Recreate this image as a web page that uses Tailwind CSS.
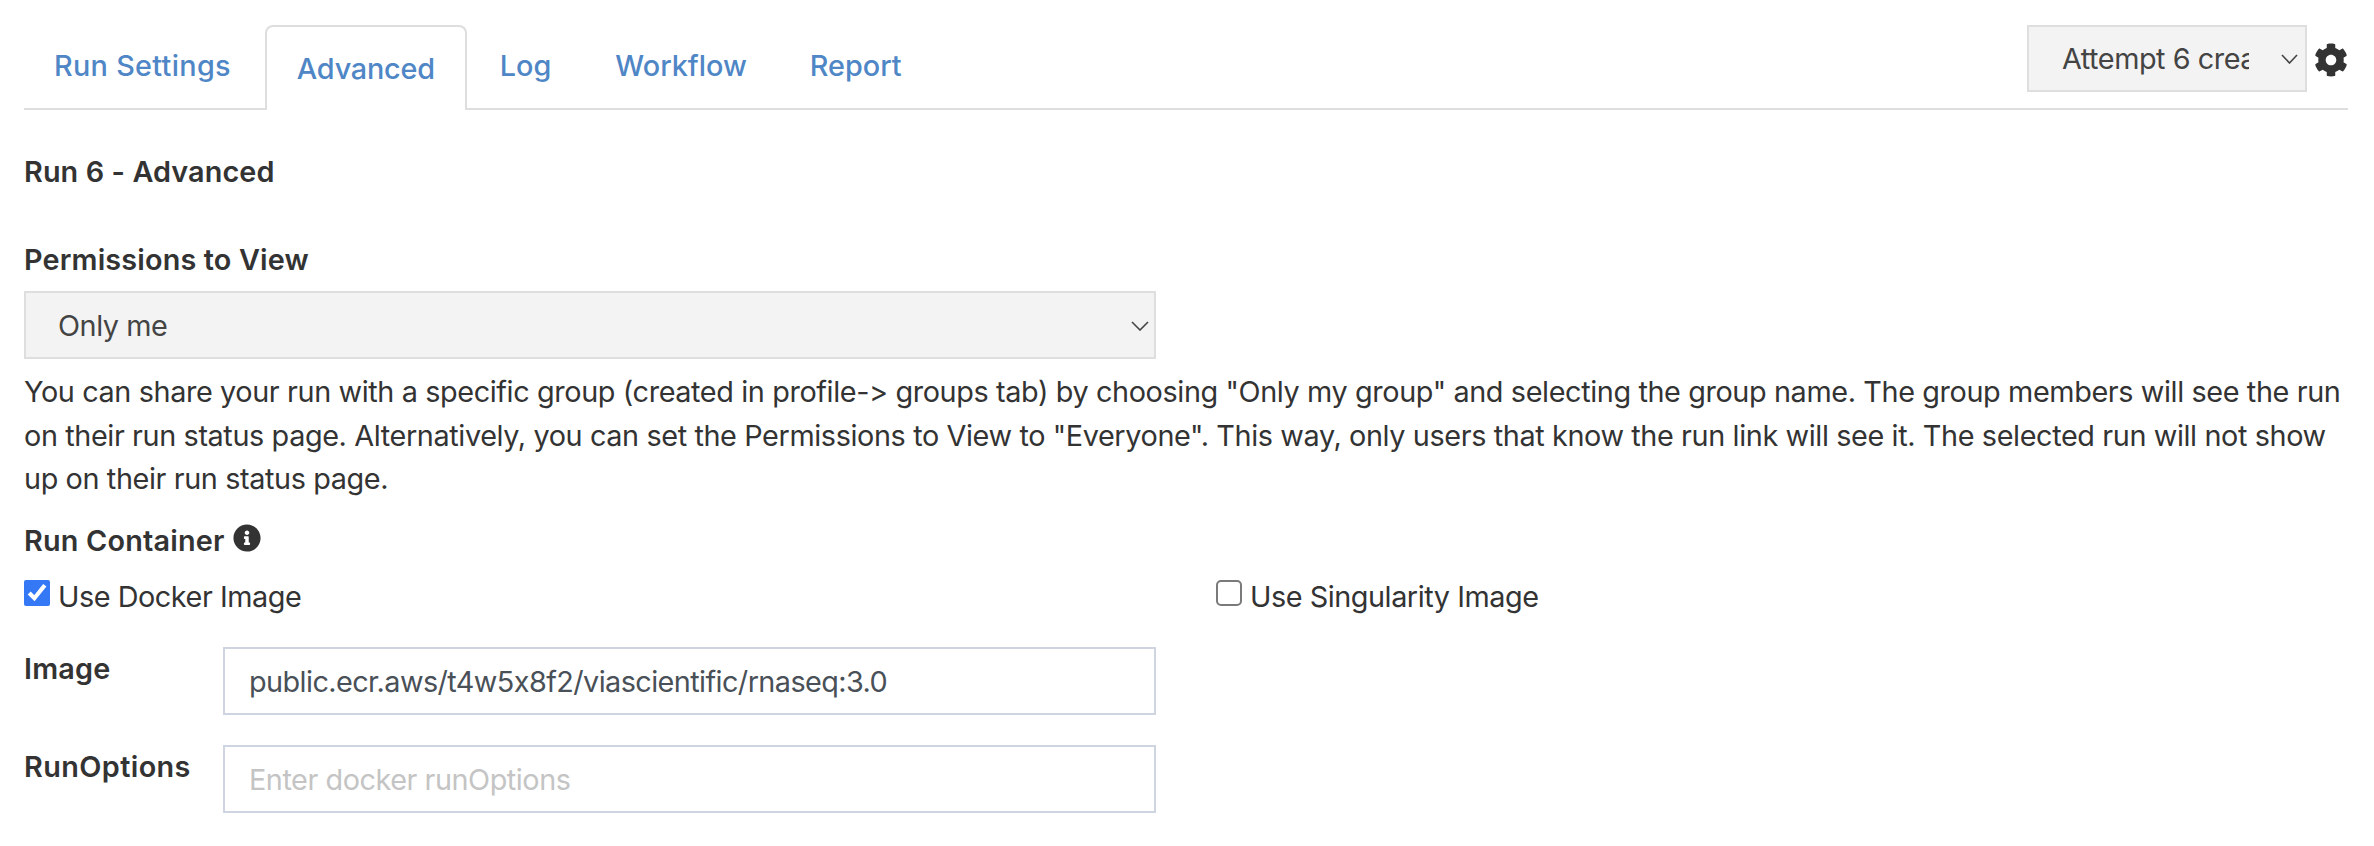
<!DOCTYPE html>
<html lang="en">
<head>
<meta charset="utf-8">
<title>Run 6 - Advanced</title>
<script src="https://cdn.jsdelivr.net/npm/@tailwindcss/browser@4"></script>
</head>
<body class="bg-white font-['Inter',sans-serif] [font-feature-settings:'calt'_0] text-[#333333] text-[28.8px] leading-[43.2px] tracking-[-0.45px] overflow-hidden">
<div class="h-[846px] overflow-hidden pl-[24px] pr-[26px]">
  <div class="flex justify-between h-[110px] border-b-2 border-[#dedede]">
    <nav class="flex h-[110px] font-medium text-[#4f86c6] tracking-normal -ml-[2px]">
      <a class="px-[32px] pt-[44px] mr-[2px] tracking-[0.3px]">Run Settings</a>
      <a class="px-[30px] pt-[20px] mr-[1px] h-[85px] mt-[25px] bg-white border-2 border-b-0 border-[#dedede] rounded-t-[8px] tracking-[-0.2px]">Advanced</a>
      <a class="px-[32px] pt-[44px]">Log</a>
      <a class="pl-[32px] pr-[31px] pt-[44px]">Workflow</a>
      <a class="px-[32px] pt-[44px]">Report</a>
    </nav>
    <div class="flex items-start pt-[25px]">
      <div class="relative w-[280px] h-[67px]">
        <select class="appearance-none w-full h-full bg-[#f3f3f3] border-2 border-[#dedede] pl-[33px] pr-[56px] pt-[1px] text-[#444444] rounded-none">
          <option>Attempt 6 created at 2024</option>
        </select>
        <svg class="absolute right-[9px] top-[29px] w-[17px] h-[10px] pointer-events-none" viewBox="0 0 17 10" fill="none" stroke="#444444" stroke-width="1.6"><path d="M1 1l7.500 8 7.500-8"/></svg>
      </div>
      <svg class="w-[34px] h-[34px] ml-[7px] mt-[18px]" viewBox="0 0 512 512" fill="#333333"><path d="M487.400 315.700l-42.600-24.600c4.300-23.200 4.300-47 0-70.200l42.600-24.600c4.900-2.800 7.100-8.600 5.500-14-11.100-35.600-30-67.800-54.700-94.600-3.800-4.100-10-5.100-14.800-2.300L380.800 110c-17.900-15.400-38.500-27.300-60.800-35.100V25.800c0-5.600-3.900-10.500-9.400-11.700-36.700-8.200-74.300-7.800-109.200 0-5.500 1.200-9.400 6.100-9.400 11.700V75c-22.200 7.900-42.800 19.800-60.800 35.100L88.700 85.500c-4.900-2.800-11-1.900-14.800 2.300-24.700 26.700-43.600 58.900-54.700 94.600-1.700 5.400.600 11.200 5.500 14L67.300 221c-4.300 23.200-4.300 47 0 70.200l-42.600 24.600c-4.900 2.800-7.100 8.600-5.500 14 11.100 35.600 30 67.800 54.700 94.600 3.800 4.100 10 5.100 14.800 2.300l42.600-24.600c17.900 15.400 38.500 27.300 60.800 35.100v49.200c0 5.600 3.900 10.500 9.400 11.700 36.700 8.200 74.300 7.800 109.200 0 5.500-1.200 9.400-6.100 9.400-11.700v-49.200c22.200-7.900 42.800-19.800 60.800-35.100l42.600 24.600c4.900 2.800 11 1.900 14.800-2.300 24.700-26.700 43.600-58.900 54.700-94.600 1.500-5.500-.700-11.300-5.600-14.100zM256 336c-44.100 0-80-35.900-80-80s35.900-80 80-80 80 35.900 80 80-35.900 80-80 80z"/></svg>
    </div>
  </div>

  <h2 class="font-semibold tracking-[0.1px] mt-[40px]">Run 6 - Advanced</h2>

  <label class="block font-semibold tracking-[0.15px] mt-[45px]">Permissions to View</label>
  <div class="relative w-[1132px] h-[68px] mt-[10px]">
    <select class="appearance-none w-full h-full bg-[#f3f3f3] border-2 border-[#dedede] pl-[32px] pr-[40px] text-[#444444] rounded-none">
      <option>Only me</option>
    </select>
    <svg class="absolute right-[7px] top-[30px] w-[18px] h-[10px] pointer-events-none" viewBox="0 0 18 10" fill="none" stroke="#444444" stroke-width="1.6"><path d="M1 1l8 8 8-8"/></svg>
  </div>
  <p class="mt-[11px] tracking-[-0.38px]">You can share your run with a specific group (created in profile-&gt; groups tab) by choosing "Only my group" and selecting the group name. The group members will see the run on their run status page. Alternatively, you can set the Permissions to View to "Everyone". This way, only users that know the run link will see it. The selected run will not show up on their run status page.</p>

  <div class="flex items-center gap-[8px] font-semibold tracking-[0.2px] mt-[19px]">
    <span>Run Container</span>
    <svg class="w-[28px] h-[28px] -mt-[6px]" viewBox="0 0 512 512" fill="#333333"><path d="M256 8C119 8 8 119 8 256s111 248 248 248 248-111 248-248S393 8 256 8zm0 110c23.200 0 42 18.800 42 42s-18.800 42-42 42-42-18.800-42-42 18.800-42 42-42zm56 254c0 6.600-5.400 12-12 12h-88c-6.600 0-12-5.400-12-12v-24c0-6.600 5.400-12 12-12h12v-64h-12c-6.600 0-12-5.400-12-12v-24c0-6.600 5.400-12 12-12h64c6.600 0 12 5.400 12 12v100h12c6.600 0 12 5.400 12 12v24z"/></svg>
  </div>

  <div class="grid grid-cols-[1192px_1fr] mt-[13px]">
    <label class="flex items-start gap-[8px]">
      <input type="checkbox" checked class="w-[26px] h-[26px] mt-[5px] accent-[#3478f6] m-0">
      <span>Use Docker Image</span>
    </label>
    <label class="flex items-start gap-[8px]">
      <input type="checkbox" class="appearance-none bg-white border-2 border-[#7a7a7a] rounded-[5px] w-[26px] h-[26px] mt-[5px] m-0">
      <span>Use Singularity Image</span>
    </label>
  </div>

  <div class="flex items-start mt-[29px] w-[1132px]">
    <label class="w-[199px] font-semibold tracking-[0.2px]">Image</label>
    <input type="text" value="public.ecr.aws/t4w5x8f2/viascientific/rnaseq:3.0" class="flex-1 h-[68px] border-2 border-[#ced4e0] pl-[24px] text-[#495057] tracking-[-0.57px] outline-none">
  </div>
  <div class="flex items-start mt-[30px] w-[1132px]">
    <label class="w-[199px] font-semibold tracking-[0.4px]">RunOptions</label>
    <input type="text" placeholder="Enter docker runOptions" class="flex-1 h-[68px] border-2 border-[#ced4e0] pl-[24px] placeholder:text-[#c4c4c4] outline-none">
  </div>
</div>
</body>
</html>
